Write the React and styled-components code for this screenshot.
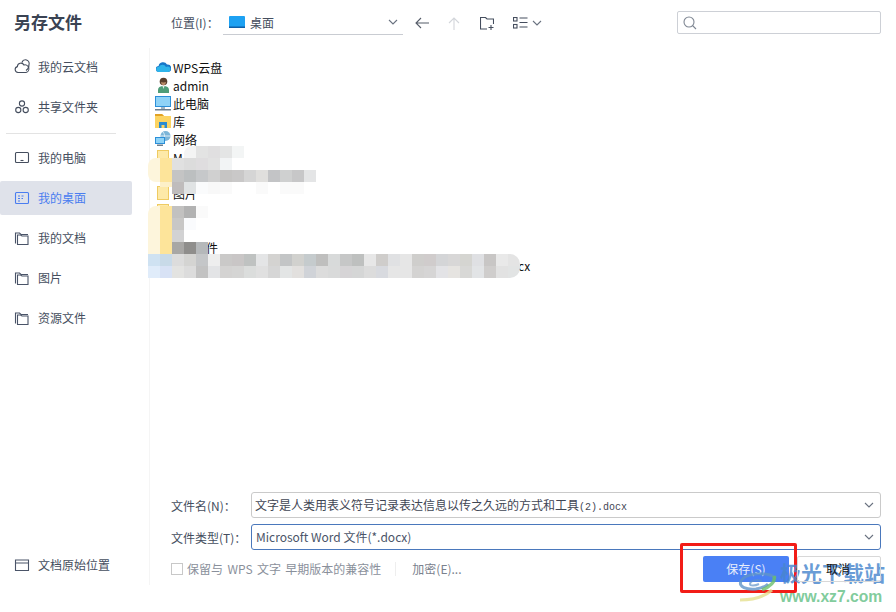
import React from "react";
import styled, { createGlobalStyle } from "styled-components";

const Global = createGlobalStyle`
  html, body { margin: 0; padding: 0; background: #fff; }
  body { font-family: "Noto Sans CJK SC", "Liberation Sans", sans-serif; overflow: hidden; }
`;

const Page = styled.div`
  position: relative;
  width: 896px;
  height: 612px;
  display: grid;
  grid-template-columns: 150px 1fr;
  overflow: hidden;
`;

/* sidebar */
const Sidebar = styled.aside`
  display: flex;
  flex-direction: column;
  height: 585px;
`;
const Title = styled.h1`
  margin: 0;
  height: 48px;
  padding: 10px 0 0 14px;
  box-sizing: border-box;
  font-size: 17px;
  line-height: 24px;
  font-weight: 700;
  color: #3a4353;
`;
const Nav = styled.nav`
  flex: 1;
  display: flex;
  flex-direction: column;
  gap: 6px;
  padding-top: 2px;
  border-right: 1px solid #f5f5f5;
`;
const NavItem = styled.div`
  width: 132px;
  height: 34px;
  box-sizing: border-box;
  padding: 0 0 1px 14px;
  display: flex;
  align-items: center;
  gap: 8px;
  font-size: 12px;
  border-radius: 2px;
  color: ${(p) => (p.$active ? "#4a7df0" : "#454e5e")};
  background: ${(p) => (p.$active ? "#dfe2ea" : "transparent")};
  ${(p) => p.$bottom && "margin-top: auto; margin-bottom: 3px;"}
`;
const Divider = styled.div`
  width: 110px;
  height: 1px;
  margin: 3px 0 1px 6px;
  background: #e3e3e3;
`;

/* main column */
const Main = styled.main`
  position: relative;
  display: flex;
  flex-direction: column;
  height: 612px;
`;
const Toolbar = styled.div`
  height: 47px;
  box-sizing: border-box;
  padding: 11px 15px 0 21px;
  display: flex;
  align-items: flex-start;
`;
const ToolLabel = styled.span`
  width: 52px;
  font-size: 12px;
  line-height: 23px;
  color: #454e5e;
`;
const Location = styled.div`
  width: 180px;
  height: 24px;
  box-sizing: border-box;
  padding: 0 5px 1px 6px;
  display: flex;
  align-items: center;
  gap: 5px;
  border-bottom: 1px solid #c9ccd2;
  font-size: 12px;
  color: #454e5e;
  span { flex: 1; }
`;
const ToolIcons = styled.div`
  height: 24px;
  margin-left: 12px;
  display: flex;
  align-items: center;
`;
const ToolButton = styled.div`
  display: flex;
  align-items: center;
  gap: ${(p) => p.$gap || 0}px;
  width: ${(p) => p.$w}px;
`;
const Search = styled.div`
  margin-left: auto;
  width: 204px;
  height: 23px;
  box-sizing: border-box;
  padding-left: 5px;
  display: flex;
  align-items: center;
  border: 1px solid #cdd0d6;
  border-radius: 2px;
`;

const FileList = styled.div`
  position: relative;
  flex: 1;
  padding: 11px 0 0 5px;
`;
const FileRow = styled.div`
  height: 18px;
  display: flex;
  align-items: center;
  gap: 2px;
  font-size: 12px;
  color: #111;
  white-space: nowrap;
`;
const FileIcon = styled.span`
  flex: none;
  width: 16px;
  display: flex;
  justify-content: center;
`;
const FileName = styled.span`
  margin-left: ${(p) => p.$offset || 0}px;
`;

/* mosaic covering the hidden file names */
const Mosaic = styled.div`
  position: absolute;
  left: -2px;
  top: 99px;
  display: flex;
  flex-direction: column;
  pointer-events: none;
`;
const MosaicRow = styled.div`
  height: 12px;
  display: flex;
  overflow: hidden;
  margin-left: ${(p) => p.$start * 12}px;
  border-radius: ${(p) => p.$radius || 0};
`;
const Tile = styled.i`
  display: block;
  flex: none;
  width: 12px;
  height: 12px;
  background: ${(p) => p.$c};
`;

/* footer form */
const Form = styled.div`
  height: 127px;
  box-sizing: border-box;
  padding: 7px 15px 0 21px;
  display: flex;
  flex-direction: column;
`;
const Field = styled.div`
  display: flex;
  align-items: center;
  height: 26px;
  margin-bottom: 6px;
`;
const FieldLabel = styled.label`
  width: 80px;
  font-size: 12px;
  color: #454e5e;
`;
const Select = styled.div`
  flex: 1;
  height: 26px;
  box-sizing: border-box;
  padding: 0 6px 1px ${(p) => (p.$focus ? 4 : 3)}px;
  display: flex;
  align-items: center;
  justify-content: space-between;
  border: 1px solid ${(p) => (p.$focus ? "#4a78bc" : "#cacaca")};
  border-radius: 3px;
  font-size: 12px;
  color: ${(p) => (p.$focus ? "#4a5468" : "#3f4654")};
  white-space: nowrap;
`;
const Mono = styled.span`
  font-family: "Liberation Mono", monospace;
  font-size: 10px;
`;
const Options = styled.div`
  display: flex;
  align-items: center;
  height: 26px;
`;
const Check = styled.span`
  width: 12px;
  height: 12px;
  border: 1px solid #c8c8c8;
  margin-right: 4px;
  box-sizing: border-box;
`;
const OptionText = styled.span`
  margin-bottom: 2px;
  font-size: 12px;
  color: #8a909b;
  word-spacing: 1.7px;
  white-space: nowrap;
`;
const OptionSep = styled.span`
  width: 1px;
  height: 14px;
  margin: 0 16px 0 14px;
  background: #eeeeee;
`;
const Encrypt = styled.span`
  margin-bottom: 2px;
  font-size: 12px;
  color: #7a818d;
`;
const Buttons = styled.div`
  margin-left: auto;
  display: flex;
  gap: 8px;
`;
const SaveButton = styled.button`
  width: 86px;
  height: 26px;
  padding: 0 0 1px;
  border: 0;
  border-radius: 2px;
  background: #4a80f5;
  color: #e8eefc;
  font: inherit;
  font-size: 12px;
`;
/* the label stays on top of the watermark, as in the screenshot */
const CancelButton = styled.button`
  position: relative;
  z-index: 1;
  width: 84px;
  height: 26px;
  padding: 0 2px 1px 0;
  border: 1px solid #d8d8d8;
  border-radius: 2px;
  background: transparent;
  color: #111;
  font: inherit;
  font-size: 12px;
`;

/* annotation and watermark laid over the screenshot */
const RedBox = styled.div`
  position: absolute;
  left: 680px;
  top: 543px;
  width: 117px;
  height: 50px;
  box-sizing: border-box;
  border: 3px solid #f21c17;
  border-radius: 2px;
  pointer-events: none;
`;
const Mark = styled.div`
  position: absolute;
  left: 738px;
  top: 558px;
  width: 158px;
  height: 48px;
  pointer-events: none;
`;
const MarkTitle = styled.div`
  position: absolute;
  left: 42px;
  top: 0;
  font-size: 21px;
  line-height: 28px;
  font-weight: 700;
  color: rgba(72, 134, 205, 0.82);
  white-space: nowrap;
`;
const MarkUrl = styled.div`
  position: absolute;
  left: 42px;
  top: 30px;
  font-family: "Liberation Sans", sans-serif;
  font-size: 15.7px;
  line-height: 18px;
  font-weight: 700;
  color: rgba(96, 190, 130, 0.8);
  white-space: nowrap;
`;
const MarkLogo = styled.svg`
  position: absolute;
  left: 0;
  top: 8px;
`;

const Line = ({ size = 16, children, color = "#454e5e", sw = 1.1 }) => (
  <svg width={size} height={size} viewBox="0 0 16 16" fill="none" stroke={color} strokeWidth={sw}>
    {children}
  </svg>
);

const FolderTabs = () => (
  <Line color="#4a5468">
    <path d="M1.5 13.5V3h4l1.5 1.5h7" />
    <path d="M3.5 14.5h10.5V6H8L6.5 5H3.5z" />
  </Line>
);

const Chevron = ({ color = "#6a7280" }) => (
  <svg width="10" height="6" viewBox="0 0 10 6" fill="none" stroke={color} strokeWidth="1.1">
    <path d="M1 1l4 4 4-4" />
  </svg>
);

const CloudBlue = () => (
  <svg width="15" height="12" viewBox="0 0 15 12">
    <path d="M3 11a3 3 0 0 1-.4-6A4.5 4.5 0 0 1 11 3.5a3.7 3.7 0 0 1 1 7.5z" fill="#1777c8" />
    <path d="M2.5 11a2.6 2.6 0 0 1 .5-5.2A4 4 0 0 1 10 6a2.8 2.8 0 0 1 4.5 2.4A2.8 2.8 0 0 1 12 11z" fill="#2fb4ea" />
  </svg>
);
const UserIcon = () => (
  <svg width="15" height="16" viewBox="0 0 15 16">
    <path d="M2 16v-3c0-2.6 2-4 5.5-4s5.5 1.4 5.5 4v3z" fill="#4f9d78" />
    <path d="M6.5 9l1 3 1-3z" fill="#e8f0ea" />
    <circle cx="7.5" cy="4.5" r="3.8" fill="#5a3f2d" />
    <path d="M5 5c1 .5 3.5.5 5 0-.2 2-1.2 3.2-2.5 3.2S5.2 7 5 5z" fill="#b98a68" />
  </svg>
);
const PcIcon = () => (
  <svg width="16" height="15" viewBox="0 0 16 15">
    <rect x="0" y="0" width="16" height="11" fill="#2c8fd8" />
    <rect x="1" y="1" width="14" height="9" fill="#8fd3f7" />
    <rect x="6" y="11" width="4" height="2" fill="#9fb4c4" />
    <rect x="0" y="13" width="16" height="1.5" fill="#6d7f8e" />
  </svg>
);
const LibIcon = () => (
  <svg width="16" height="14" viewBox="0 0 16 14">
    <path d="M0 0h7l2 2h7v12H0z" fill="#fcd462" />
    <path d="M0 0h7l2 2H0z" fill="#e2a224" />
    <path d="M4 14V8h8v6H9.5v-3h-3v3z" fill="#2b8bd0" />
  </svg>
);
const NetIcon = () => (
  <svg width="16" height="16" viewBox="0 0 16 16">
    <circle cx="10.5" cy="5" r="5" fill="#7cb5d8" />
    <path d="M8 1c2 2 2 6 0 8M6 5h10" fill="none" stroke="#dcecf6" strokeWidth="1" />
    <rect x="0" y="6" width="10" height="7" fill="#2c8fd8" />
    <rect x="1" y="7" width="8" height="5" fill="#8fd3f7" />
    <rect x="2" y="13.5" width="6" height="1.5" fill="#6d7f8e" />
  </svg>
);
const FolderIcon = () => (
  <svg width="14" height="14" viewBox="0 0 14 14">
    <rect x="1.5" y="0.5" width="11" height="13" fill="#fde9a8" stroke="#efcb62" />
  </svg>
);
const DesktopIcon = () => (
  <svg width="16" height="12" viewBox="0 0 16 12">
    <rect width="16" height="12" rx="1" fill="#1da1f2" />
    <rect y="10.5" width="16" height="1.5" fill="#0d5fa8" />
  </svg>
);

const CREAM = "#fdf5dc";
const GOLD = "#fde49a";
const LOWER_WHITE = "linear-gradient(transparent 50%, #fff 50%)";

const tiles = [
  { start: 3, row: ["#f4f4f4", "#e3e3e3", "#e0dfe0", "#e4e5e5", "#f3f5f5"], radius: "8px 0 0 0" },
  { start: 0, row: [CREAM, GOLD, "#e0e0e0", "#dcdcdc", "#dfdddf", "#e2e2e2", "#f2f4f5"], radius: "8px 0 0 0" },
  { start: 0, row: [CREAM, GOLD, "#c4c4c4", "#bcbfc0", "#c6c8ca", "#d0d0d0", "#c6c5c4", "#c9c8c8", "#d5d5d5", "#e0dfdd", "#c3c4c6", "#cfd0d0", "#c7c7c8", "#e4e5e6"], radius: "0 0 0 8px" },
  { start: 1, row: ["linear-gradient(#fdf0c8 40%, transparent 40%)", "#bfbcbc", "#e0e3e4", "#fafbfc", "#f8f8f8", "#fafafa", "transparent", "transparent", "#fafafa", "transparent", "#fafafa", "#fafafa"] },
  { start: 2, row: [LOWER_WHITE, LOWER_WHITE] },
  { start: 0, row: [CREAM, GOLD, "#c2c1c0", "#b2b2b2", "#fafafa"], radius: "8px 0 0 0" },
  { start: 0, row: [CREAM, GOLD, "#c8c7c6", "#fafbfd"] },
  { start: 0, row: [CREAM, GOLD, "#d2d2d3"] },
  { start: 0, row: [CREAM, GOLD, "#a8a7a5", "#8f8e8c", "#b5b8ba"] },
  { start: 0, row: ["#cfe2f2", "#c8dae8", "#dcdcdc", "#d4d4d2", "#c4c6c8", "#eeeeee", "#cac9c8", "#c9c6c6", "#bfc2c1", "#e4e5e6", "#d4d3d1", "#c3c5c6", "#d1d1ce", "#c5cbcd", "#bfbfbe", "#d8dada", "#c6c7c7", "#bec0bf", "#e7e7e7", "#cfcdcb", "#e0e1e3", "#e6e6e6", "#cfcecc", "#d0cccc", "#d4d5d7", "#d8d7d7", "#d5d5d1", "#dfe0e3", "#c8c6c5", "#e9e9e9", "#e4e4e4"], radius: "0 10px 0 0" },
  { start: 0, row: ["#e0ecfa", "#d8e2f5", "#e3e3e1", "#dcdcdc", "#c2c2c2", "#e3e4e6", "#d4d3d2", "#d5d5d4", "#dbdddc", "#e0e0e0", "#d6d6d6", "#e3e5e5", "#e2e0de", "#d0d3d8", "#dcdcdc", "#d9dada", "#d6d4d6", "#d5d6d6", "#dcdcdc", "#d8dadf", "#e6e6e6", "#e6e6e6", "#d4d3d2", "#d6d5d5", "#e3e3e6", "#e6e4e1", "#d8d8d6", "#e2e4e6", "#cfcdcc", "#e2e2e2", "#e2e4e4"], radius: "0 0 10px 0" },
];

const files = [
  { icon: <CloudBlue />, name: "WPS云盘" },
  { icon: <UserIcon />, name: "admin" },
  { icon: <PcIcon />, name: "此电脑" },
  { icon: <LibIcon />, name: "库" },
  { icon: <NetIcon />, name: "网络" },
  { icon: <FolderIcon />, name: "M" },
  { icon: <FolderIcon />, name: "" },
  { icon: <FolderIcon />, name: "图片" },
  { icon: <FolderIcon />, name: "" },
  { icon: <FolderIcon />, name: "" },
  { icon: <FolderIcon />, name: "文件", offset: 21 },
  { icon: <FolderIcon />, name: "cx", offset: 345 },
];

export default function App() {
  return (
    <Page>
      <Global />
      <Sidebar>
        <Title>另存文件</Title>
        <Nav>
          <NavItem>
            <Line>
              <path d="M4 13.5a3 3 0 0 1-.6-5.9 3.5 3.5 0 0 1 6.6-1.6 3.8 3.8 0 0 1 2 7.5z" />
              <path d="M8 3.5a3.5 3.5 0 0 1 7 2c0 3-1.5 5-3 6" />
            </Line>
            我的云文档
          </NavItem>
          <NavItem>
            <Line>
              <circle cx="8" cy="4.5" r="2.6" />
              <circle cx="4.3" cy="11" r="2.6" />
              <circle cx="11.7" cy="11" r="2.6" />
            </Line>
            共享文件夹
          </NavItem>
          <Divider />
          <NavItem>
            <Line>
              <rect x="1.5" y="2.5" width="13" height="10" rx="1" />
              <path d="M6.5 10.5h3" />
            </Line>
            我的电脑
          </NavItem>
          <NavItem $active>
            <Line color="#4a7df0">
              <rect x="1.5" y="2.5" width="13" height="11" rx="1" />
              <path d="M4 6h2M7.5 6h2M4 8.5h2M7.5 8.5h1.5M4 11h2" />
            </Line>
            我的桌面
          </NavItem>
          <NavItem>
            <FolderTabs />
            我的文档
          </NavItem>
          <NavItem>
            <FolderTabs />
            图片
          </NavItem>
          <NavItem>
            <FolderTabs />
            资源文件
          </NavItem>
          <NavItem $bottom>
            <Line color="#4a5468">
              <path d="M1.5 3h13v10.5h-13zM1.5 6h13" />
            </Line>
            文档原始位置
          </NavItem>
        </Nav>
      </Sidebar>

      <Main>
        <Toolbar>
          <ToolLabel>位置(I)：</ToolLabel>
          <Location>
            <DesktopIcon />
            <span>桌面</span>
            <Chevron />
          </Location>
          <ToolIcons>
            <ToolButton $w={33}>
              <svg width="14" height="12" viewBox="0 0 14 12" fill="none" stroke="#555c69" strokeWidth="1.1">
                <path d="M14 6H1M6 1L1 6l5 5" />
              </svg>
            </ToolButton>
            <ToolButton $w={32}>
              <svg width="12" height="13" viewBox="0 0 12 13" fill="none" stroke="#d3d6db" strokeWidth="1.1">
                <path d="M6 13V1M1 6l5-5 5 5" />
              </svg>
            </ToolButton>
            <ToolButton $w={33}>
              <svg width="14" height="13" viewBox="0 0 14 13" fill="none" stroke="#454e5e" strokeWidth="1.1">
                <path d="M7 12H.5V.5h5L7 2h6.5v5M8.5 10.5h5M11 8v5" />
              </svg>
            </ToolButton>
            <ToolButton $w={40} $gap={4}>
              <svg width="15" height="12" viewBox="0 0 15 12" fill="none" stroke="#454e5e" strokeWidth="1.1">
                <rect x="0.5" y="0.5" width="3.5" height="3.5" />
                <rect x="0.5" y="7.5" width="3.5" height="3.5" />
                <path d="M6.5 1h8M6.5 5.5h8M6.5 10h8" />
              </svg>
              <Chevron />
            </ToolButton>
          </ToolIcons>
          <Search>
            <svg width="14" height="14" viewBox="0 0 14 14" fill="none" stroke="#7f8793" strokeWidth="1.1">
              <circle cx="6" cy="6" r="5" />
              <path d="M9.5 9.5L13 13" />
            </svg>
          </Search>
        </Toolbar>

        <FileList>
          {files.map((f, i) => (
            <FileRow key={i}>
              <FileIcon>{f.icon}</FileIcon>
              <FileName $offset={f.offset}>{f.name}</FileName>
            </FileRow>
          ))}
          <Mosaic>
            {tiles.map((t, i) => (
              <MosaicRow key={i} $start={t.start} $radius={t.radius}>
                {t.row.map((c, j) => (
                  <Tile key={j} $c={c} />
                ))}
              </MosaicRow>
            ))}
          </Mosaic>
        </FileList>

        <Form>
          <Field>
            <FieldLabel>文件名(N)：</FieldLabel>
            <Select>
              <span>
                文字是人类用表义符号记录表达信息以传之久远的方式和工具<Mono>(2).docx</Mono>
              </span>
              <Chevron />
            </Select>
          </Field>
          <Field>
            <FieldLabel>文件类型(T)：</FieldLabel>
            <Select $focus>
              <span>Microsoft Word 文件(*.docx)</span>
              <Chevron />
            </Select>
          </Field>
          <Options>
            <Check />
            <OptionText>保留与 WPS 文字 早期版本的兼容性</OptionText>
            <OptionSep />
            <Encrypt>加密(E)...</Encrypt>
            <Buttons>
              <SaveButton>保存(S)</SaveButton>
              <CancelButton>取消</CancelButton>
            </Buttons>
          </Options>
        </Form>
      </Main>

      <RedBox />
      <Mark>
        <MarkLogo width="42" height="36" viewBox="0 0 42 36" fill="none">
          <path d="M38 12C30 6 8 6 3 15c-3 6 6 9 15 8 6-1 10-3 12-5" stroke="#5f93c8" strokeWidth="3" opacity="0.8" />
          <path d="M36 10c2 6-3 10-12 14" stroke="#6cbf6a" strokeWidth="3.5" opacity="0.8" />
          <path d="M24 15c-6-2-12 0-12 3 0 2 5 2 9 0" stroke="#5f93c8" strokeWidth="2" opacity="0.7" />
          <path d="M2 34c12 0 24-3 32-10" stroke="#e5e08e" strokeWidth="3" opacity="0.8" />
        </MarkLogo>
        <MarkTitle>极光下载站</MarkTitle>
        <MarkUrl>www.xz7.com</MarkUrl>
      </Mark>
    </Page>
  );
}
